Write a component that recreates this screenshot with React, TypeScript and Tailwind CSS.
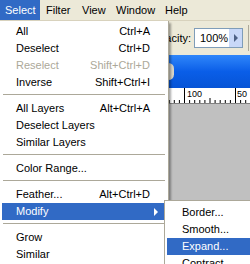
import React from "react";

type Item =
  | { sep: true }
  | { label: string; key?: string; disabled?: boolean; active?: boolean; sub?: boolean };

const items: Item[] = [
  { label: "All", key: "Ctrl+A" },
  { label: "Deselect", key: "Ctrl+D" },
  { label: "Reselect", key: "Shift+Ctrl+D", disabled: true },
  { label: "Inverse", key: "Shift+Ctrl+I" },
  { sep: true },
  { label: "All Layers", key: "Alt+Ctrl+A" },
  { label: "Deselect Layers" },
  { label: "Similar Layers" },
  { sep: true },
  { label: "Color Range..." },
  { sep: true },
  { label: "Feather...", key: "Alt+Ctrl+D" },
  { label: "Modify", active: true, sub: true },
  { sep: true },
  { label: "Grow" },
  { label: "Similar" },
];

const subItems = [
  { label: "Border..." },
  { label: "Smooth..." },
  { label: "Expand...", active: true },
  { label: "Contract" },
];

function Ruler() {
  const ticks = [];
  for (let k = -40; k < 20; k++) {
    const x = 184 + k * 5.1;
    if (x < 0 || x > 250) continue;
    const long = k % 10 === 0;
    const mid = !long && k % 5 === 0;
    const y1 = long ? 0 : mid ? 10 : 12;
    ticks.push(<line key={k} x1={x + 0.5} x2={x + 0.5} y1={y1} y2={15} stroke="#000" strokeWidth={1} />);
  }
  return (
    <svg width="250" height="16" className="block">
      <rect x="0" y="0" width="250" height="16" fill="#fff" />
      {ticks}
      <text x="187" y="9" fontSize="9" fontFamily="Liberation Sans, sans-serif" fill="#000">100</text>
      <text x="237" y="9" fontSize="9" fontFamily="Liberation Sans, sans-serif" fill="#000">50</text>
      <line x1="0" x2="250" y1="15.5" y2="15.5" stroke="#808080" />
    </svg>
  );
}

export default function App() {
  return (
    <div className="relative w-[250px] h-[264px] overflow-hidden bg-[#c0c0c0] text-[11px] text-black font-['Liberation_Sans',sans-serif]">
      {/* menu bar */}
      <div className="flex h-5 bg-[#ece9d8] items-center">
        <div className="h-5 w-[40px] pl-[5px] flex items-center bg-[#316ac5] text-white">Select</div>
        <div className="h-5 w-[36px] pl-[6px] flex items-center">Filter</div>
        <div className="h-5 w-[34px] pl-[6px] flex items-center">View</div>
        <div className="h-5 w-[49px] pl-[6px] flex items-center">Window</div>
        <div className="h-5 pl-[6px] flex items-center">Help</div>
      </div>

      {/* workspace behind the menu */}
      <div className="flex flex-col">
        <div className="h-[35px] bg-[#ece9d8] border-t border-[#d8d2bd] flex items-center justify-end pr-[1px]">
          <span className="mr-[3px]">Opacity:</span>
          <div className="w-[49px] h-[20px] bg-white border border-[#7f9db9] flex items-center">
            <span className="pl-[5px] flex-1">100%</span>
            <div className="w-[13px] h-full bg-[#c8d8f8] flex items-center justify-center">
              <div className="w-0 h-0 border-y-[4px] border-y-transparent border-l-[4px] border-l-[#4d6185]" />
            </div>
          </div>
          <div className="ml-[5px] w-px h-[26px] bg-[#aca899]" />
        </div>
        <div className="h-[33px] bg-gradient-to-b from-[#2f86fa] via-[#0a5ee8] to-[#0654d6] flex items-center">
          <div className="ml-[163px] w-[11px] h-[17px] rounded-full bg-[#d8d4c8]" />
        </div>
        <Ruler />
      </div>

      {/* Select dropdown */}
      <div className="absolute left-0 top-[21px] w-[169px] h-[260px] bg-white border-r border-[#aca899] shadow-[2px_2px_2px_rgba(0,0,0,0.35)] pt-[2px] px-[2px]">
        {items.map((it, i) =>
          "sep" in it ? (
            <div key={i} className="h-[9px] pt-[3px] px-px">
              <div className="border-t border-[#aca899]" />
            </div>
          ) : (
            <div
              key={i}
              className={
                "h-[17px] flex items-center justify-between pl-[14px] pr-[16px] " +
                (it.active ? "bg-[#316ac5] text-white " : "") +
                (it.disabled ? "text-[#aca899]" : "")
              }
            >
              <span>{it.label}</span>
              {it.key && <span>{it.key}</span>}
              {it.sub && (
                <div className="mr-[-8px] w-0 h-0 border-y-[4px] border-y-transparent border-l-[4px] border-l-white" />
              )}
            </div>
          )
        )}
      </div>

      {/* Modify submenu */}
      <div className="absolute left-[164px] top-[200px] w-[100px] h-[80px] bg-white border border-[#aca899] pt-[3px] px-[2px]">
        {subItems.map((it) => (
          <div
            key={it.label}
            className={"h-[17px] flex items-center pl-[15px] " + (it.active ? "bg-[#316ac5] text-white" : "")}
          >
            {it.label}
          </div>
        ))}
      </div>
    </div>
  );
}
